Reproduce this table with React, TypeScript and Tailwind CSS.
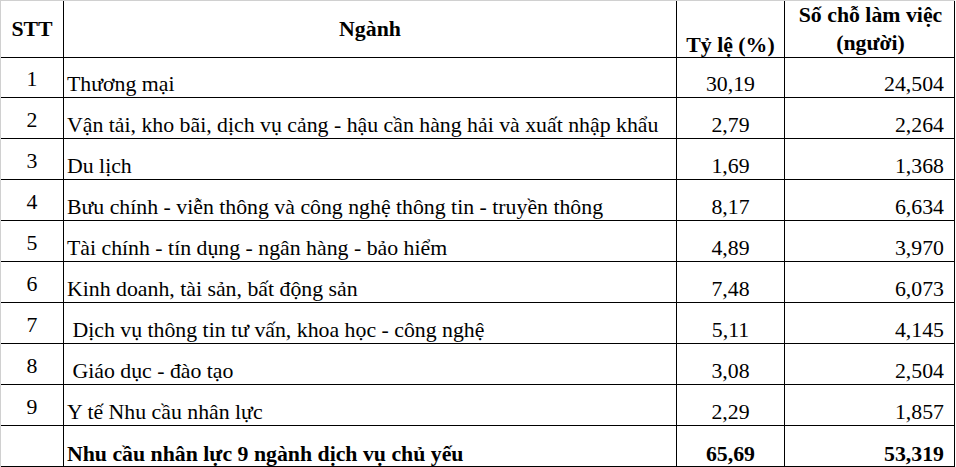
const rows = [
  { stt: "1", name: "Thương mại", pct: "30,19", jobs: "24,504" },
  { stt: "2", name: "Vận tải, kho bãi, dịch vụ cảng - hậu cần hàng hải và xuất nhập khẩu", pct: "2,79", jobs: "2,264" },
  { stt: "3", name: "Du lịch", pct: "1,69", jobs: "1,368" },
  { stt: "4", name: "Bưu chính - viễn thông và công nghệ thông tin - truyền thông", pct: "8,17", jobs: "6,634" },
  { stt: "5", name: "Tài chính - tín dụng - ngân hàng - bảo hiểm", pct: "4,89", jobs: "3,970" },
  { stt: "6", name: "Kinh doanh, tài sản, bất động sản", pct: "7,48", jobs: "6,073" },
  { stt: "7", name: " Dịch vụ thông tin tư vấn, khoa học - công nghệ", pct: "5,11", jobs: "4,145" },
  { stt: "8", name: " Giáo dục - đào tạo", pct: "3,08", jobs: "2,504" },
  { stt: "9", name: "Y tế Nhu cầu nhân lực", pct: "2,29", jobs: "1,857" },
];

const cols = "grid grid-cols-[63px_613px_108px_170px]";

const App = () => {
  return (
    <div className="w-[956px] h-[467px] bg-white overflow-hidden">
      <div className="w-[955px] border-t border-l border-[#d0d0d0] text-black text-[21.8px] leading-[24px] font-['Liberation_Serif','Times_New_Roman',serif]">
        {/* header */}
        <div className={`${cols} h-[56px] font-bold`}>
          <div className="border-r border-b border-black flex items-center justify-center">STT</div>
          <div className="border-r border-b border-black flex items-center justify-center">Ngành</div>
          <div className="border-r border-b border-black flex items-end justify-center">Tỷ lệ (%)</div>
          <div className="border-r border-b border-black flex flex-col items-center leading-[28px] pl-[2px]">
            <span>Số chỗ làm việc</span>
            <span>(người)</span>
          </div>
        </div>

        {rows.map((r) => (
          <div key={r.stt} className={`${cols} h-[41px]`}>
            <div className="border-r border-b border-black flex items-end justify-center pb-[6px]">{r.stt}</div>
            <div className="border-r border-b border-black flex items-end pl-[3px] pb-px whitespace-pre">{r.name}</div>
            <div className="border-r border-b border-black flex items-end justify-center pb-px">{r.pct}</div>
            <div className="border-r border-b border-black flex items-end justify-end pr-[10px] pb-px">{r.jobs}</div>
          </div>
        ))}

        {/* total */}
        <div className={`${cols} h-[41px] font-bold`}>
          <div className="border-r border-b border-black"></div>
          <div className="border-r border-b border-black flex items-end pl-[3px]">Nhu cầu nhân lực 9 ngành dịch vụ chủ yếu</div>
          <div className="border-r border-b border-black flex items-end justify-center">65,69</div>
          <div className="border-r border-b border-black flex items-end justify-end pr-[10px]">53,319</div>
        </div>
      </div>
    </div>
  );
};

export default App;
